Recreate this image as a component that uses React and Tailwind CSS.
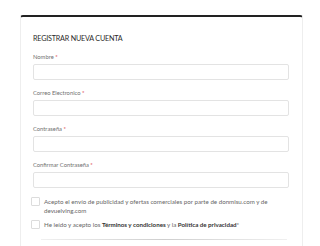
import React from "react";

const Field = ({ label }) => (
  <div className="flex flex-col">
    <label className="text-[5.8px] leading-[8px] text-[#707070] mb-[3px]">
      {label} <span className="text-[#d9363e]">*</span>
    </label>
    <input
      type="text"
      className="h-[16px] w-full rounded-[2px] border border-[#e3e3e3] bg-white outline-none"
    />
  </div>
);

const App = () => {
  return (
    <div className="min-h-screen bg-white font-['Lato','Liberation_Sans',sans-serif]">
      <div className="pt-[15px] pl-[20px]">
        <div className="w-[283px] h-[240px] overflow-hidden rounded-t-[3px] border-t-2 border-x border-t-[#222] border-x-[#eeeeee] bg-white pl-[12px] pr-[13px] pt-[17px]">
          <h2 className="text-[7.2px] leading-[10px] tracking-[-0.2px] text-[#2a2a2a] mb-[9px]">
            REGISTRAR NUEVA CUENTA
          </h2>

          <div className="flex flex-col gap-[9px]">
            <Field label="Nombre" />
            <Field label="Correo Electronico" />
            <Field label="Contraseña" />
            <Field label="Confirmar Contraseña" />
          </div>

          <div className="mt-[9px] flex flex-col gap-[5px]">
            <div className="flex items-start gap-[4px] -ml-[2px]">
              <span className="h-[9px] w-[9px] shrink-0 rounded-[1px] border border-[#dcdcdc] bg-white"></span>
              <p className="text-[6.2px] leading-[9px] text-[#666]">
                Acepto el envío de publicidad y ofertas comerciales por parte de donmisu.com y de devuelving.com
              </p>
            </div>
            <div className="flex items-center gap-[4px] -ml-[2px]">
              <span className="h-[9px] w-[9px] shrink-0 rounded-[1px] border border-[#dcdcdc] bg-white"></span>
              <p className="text-[6.2px] leading-[9px] text-[#666]">
                He leído y acepto los <span className="font-bold text-[#333]">Términos y condiciones</span> y la <span className="font-bold text-[#333]">Política de privacidad</span>*
              </p>
            </div>
          </div>

          <div className="mt-[10px] ml-[8px] mr-[2px] h-[1px] bg-gradient-to-r from-[#f0f0f0] via-[#cfcfcf] to-[#f0f0f0]"></div>
        </div>
      </div>
    </div>
  );
};

export default App;
